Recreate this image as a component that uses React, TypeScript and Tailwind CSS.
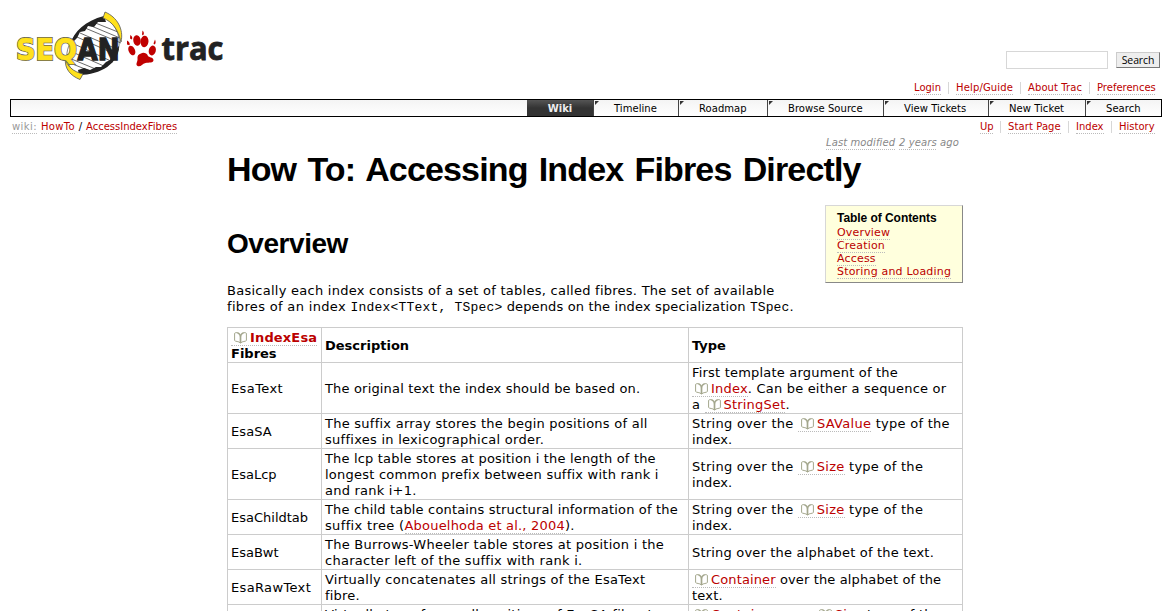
import React from "react";

type BoxProps = { children: React.ReactNode; className?: string };

function A({ children, className = "" }: BoxProps) {
  return (
    <a className={`border-b border-dotted border-[#bbb] text-[#b00] ${className}`}>{children}</a>
  );
}

function BookIcon() {
  return (
    <svg width="13" height="12" viewBox="0 0 13 12" className="mr-[3px] ml-[3px] inline-block align-[-2px]">
      <g fill="none" stroke="#a3a68c">
        <path d="M6.500 4.500 V11" strokeWidth="1.700" />
        <path d="M3.500 .8 C5.500 1.200 6.300 2.500 6.500 5 C6.700 2.500 7.500 1.200 9.500 .8" strokeWidth="1.300" />
        <path d="M4.300 1 C2.500 .4 1.400 .6 .6 1.300 V8.500 C1.500 9.800 4.500 9 6.500 11 C8.500 9 11.500 9.800 12.400 8.500 V1.300 C11.600 .6 10.500 .4 8.700 1" strokeWidth="1" />
      </g>
    </svg>
  );
}

function Doc({ children }: BoxProps) {
  return (
    <A>
      <BookIcon />
      {children}
    </A>
  );
}

function L({ children, className = "" }: BoxProps) {
  return <span className={`block ${className}`}>{children}</span>;
}

function Logo() {
  return (
    <svg width="215" height="74" viewBox="12 8 215 74" role="img" aria-label="SeqAn trac">
      <path d="M78 74 C60 64 66 42 80 31 C88 23 99 18 104 17 C120 26 124 46 113 60 C104 70 87 71 79 76 Z" fill="#fff" stroke="#333" strokeWidth=".6" />
      <g stroke="#444" strokeWidth=".8">
        <path d="M93 22 L118 32 M89 25 L120 38 M85 28 L121 43 M80 33 L119 50 M77 37 L117 55 M72 43 L113 62 M70 51 L106 67 M69 58 L98 70 M70 63 L90 71" />
      </g>
      <path d="M70 45 C74 31 85 21 104 16 L106 22 L98 22 L94 27 L88 26 L85 31 L80 32 L77 38 Z" fill="#222" />
      <path d="M78 70 L84 68 L90 70 L96 67 L101 67 L106 62 L110 60 L112 53 L119 46 C119 63 101 75 79 75 Z" fill="#222" />
      <path d="M105 12 C117 17 124 29 121 42 C118 30 113 22 103 18 Z" fill="#ffe11b" stroke="#555" strokeWidth=".8" />
      <path d="M65.500 58 C66 66 74 72 83 74 L80 79.500 C71 76 64 69 65.500 58 Z" fill="#ffe11b" stroke="#555" strokeWidth=".8" />
      <g fontFamily="'DejaVu Sans', sans-serif" fontWeight="bold" fontSize="29.500">
        <text x="16" y="60" textLength="61" lengthAdjust="spacingAndGlyphs" fill="#ffe11b" stroke="#555" strokeWidth="2">SEQ</text>
        <text x="16" y="60" textLength="61" lengthAdjust="spacingAndGlyphs" fill="#ffe11b" stroke="#ffe11b" strokeWidth=".6" aria-hidden="true">SEQ</text>
        <text x="77.500" y="60" textLength="42" lengthAdjust="spacingAndGlyphs" fill="#222" stroke="#222" strokeWidth="1.400">AN</text>
      </g>
      <g fill="#c00000">
        <ellipse cx="137" cy="40.500" rx="3.700" ry="5.300" transform="rotate(-10 137 40.500)" />
        <ellipse cx="144.500" cy="41.500" rx="4" ry="5.800" transform="rotate(5 144.500 41.500)" />
        <ellipse cx="131.800" cy="50.500" rx="3.200" ry="5" transform="rotate(-25 131.800 50.500)" />
        <ellipse cx="152.300" cy="50.500" rx="3.500" ry="5" transform="rotate(15 152.300 50.500)" />
        <path d="M130 38.500 l.3 -3.500 q3 2 1.500 4.500 Z M142 34.500 l.5 -4 q2.500 2.500 .5 5 Z M127 44.500 l0 -4 q3.500 2 2.500 4.800 Z M153.500 43.500 l1.500 -4 q1.500 3.500 -.5 5 Z" />
        <path d="M141 53.500 C143 52 147 53 148 56 C149 57.500 153 57 153.500 60 C153.500 63 149 62.500 145.500 63 C142 64 140.500 67.500 137.500 66 C135 64 138 61.500 137.500 59 C137 56 138.500 54 141 53.500 Z" />
      </g>
      <text x="161.500" y="60" fontFamily="'Open Sans', sans-serif" fontWeight="bold" fontSize="33" textLength="62" lengthAdjust="spacingAndGlyphs" fill="#222" stroke="#222" strokeWidth=".8">trac</text>
    </svg>
  );
}

const tabs = [
  { label: "Timeline", box: "w-[85px]" },
  { label: "Roadmap", box: "w-[89px]" },
  { label: "Browse Source", box: "w-[116px]" },
  { label: "View Tickets", box: "w-[105px]" },
  { label: "New Ticket", box: "w-[97px]" },
  { label: "Search", box: "w-[76px]" },
];

function NavRow({ items }: { items: { label: string; box: string }[] }) {
  return (
    <div className="flex h-[13px] leading-[12px] whitespace-nowrap">
      {items.map((it, i) => (
        <div key={it.label} className={`flex h-[12px] ${i ? "ml-[7px] border-l border-[#d7d7d7] pl-[7px]" : ""}`}>
          <A className={`block h-[13px] ${it.box}`}>{it.label}</A>
        </div>
      ))}
    </div>
  );
}

const td = "border border-[#ccc] px-[3px] pt-[2px] pb-0 align-middle";
const mono = "font-['Courier_New','Liberation_Mono',monospace] text-[13px] leading-[10px]";

function Row({ name, desc, type }: { name: React.ReactNode; desc: React.ReactNode; type: React.ReactNode }) {
  return (
    <tr>
      <td className={td}>{name}</td>
      <td className={td}>{desc}</td>
      <td className={td}>{type}</td>
    </tr>
  );
}

export default function App() {
  return (
    <div className="h-[611px] w-[1172px] overflow-hidden bg-white font-['Verdana','DejaVu_Sans',sans-serif] text-[13px] text-black">
      <header className="flex h-[99px] justify-between pr-[12px] pl-[12px] text-[10px]">
        <div className="pt-[8px]">
          <Logo />
        </div>
        <div className="flex flex-col items-end pt-[51px]">
          <div className="flex gap-[8px]">
            <div className="h-[18px] w-[102px] border border-[#d7d7d7]" />
            <button className="mt-[1px] h-[16px] w-[44px] border border-t-[#ccc] border-r-[#777] border-b-[#777] border-l-[#ccc] bg-[#eee] font-['Open_Sans',sans-serif] text-[10.5px] leading-[14px] tracking-[-0.1px] text-black">Search</button>
          </div>
          <div className="mt-[12px] mr-[5px] pt-px">
            <NavRow items={[{ label: "Login", box: "w-[27px]" }, { label: "Help/Guide", box: "w-[57px] tracking-[0.15px]" }, { label: "About Trac", box: "w-[54px] tracking-[0.1px]" }, { label: "Preferences", box: "w-[58px]" }]} />
          </div>
        </div>
      </header>

      <nav className="mx-[10px] flex h-[18px] justify-end border border-black bg-linear-to-b from-[#f4f4f4] to-white text-[10px] leading-[17px] whitespace-nowrap">
        <div className="h-[16px] w-[66px] bg-linear-to-b from-[#555] via-[#333] to-[#333] text-center font-bold text-[#eee]">Wiki</div>
        {tabs.map((t) => (
          <div key={t.label} className={`flex h-[16px] border-l border-[#444] ${t.box}`}>
            <svg width="4" height="5" className="mt-[1px] ml-[1px]"><path d="M0 0H4L0 4Z" fill="#333" /></svg>
            <span className="pl-[15px] tracking-[0.05px]">{t.label}</span>
          </div>
        ))}
      </nav>

      <div className="flex h-[19px] justify-between pt-[4px] pr-[17px] pl-[12px] text-[10px] leading-[12px]">
        <div className="flex h-[13px] whitespace-nowrap">
          <span className="h-[13px] w-[25px] border-b border-dotted border-[#bbb] tracking-[0.4px] text-[#999]">wiki:</span>
          <A className="ml-[4px] block h-[13px] w-[34px] tracking-[0.3px]">HowTo</A>
          <span className="w-[11px] text-center">/</span>
          <A className="block h-[13px] w-[91px]">AccessIndexFibres</A>
        </div>
        <NavRow items={[{ label: "Up", box: "w-[13px]" }, { label: "Start Page", box: "w-[53px] tracking-[0.1px]" }, { label: "Index", box: "w-[28px]" }, { label: "History", box: "w-[36px]" }]} />
      </div>

      <main className="ml-[227px] w-[736px]">
        <div className="flex h-[13px] justify-end gap-[4px] pt-px pr-[4px] text-[10px] leading-[12px] tracking-[0.1px] whitespace-nowrap text-[#888] italic">
          <span className="h-[13px] w-[69px] border-b border-dotted border-[#bbb]">Last modified</span>
          <span className="h-[13px] w-[37px] border-b border-dotted border-[#bbb]">2 years</span>
          <span className="w-[19px]">ago</span>
        </div>
        <div className="flex h-[134px]">
          <div className="w-[598px] font-['Liberation_Sans',Arial,sans-serif] font-bold whitespace-nowrap">
            <h1 className="text-[34px] leading-[40px] tracking-[-0.85px] [word-spacing:2.6px]">How To: Accessing Index Fibres Directly</h1>
            <h2 className="mt-[39px] text-[28px] leading-[32px] tracking-[-0.45px]">Overview</h2>
          </div>
          <aside className="mt-[56px] h-[78px] w-[138px] shrink-0 border border-t-[#d7d7d7] border-r-[#888] border-b-[#888] border-l-[#d7d7d7] bg-[#ffffdd] pt-[6px] pl-[11px] text-[11px] leading-[13px] whitespace-nowrap">
            <h4 className="mb-[1px] font-['Liberation_Sans',Arial,sans-serif] text-[12px] font-bold tracking-[-0.05px]">Table of Contents</h4>
            <ul className="tracking-[0.18px]">
              {["Overview", "Creation", "Access", "Storing and Loading"].map((s) => (
                <li key={s} className="h-[13px]"><A className="inline-block h-[13px] leading-[12px]">{s}</A></li>
              ))}
            </ul>
          </aside>
        </div>

        <div className="h-[44px] text-[13px] leading-[16px] whitespace-nowrap">
          <L className="tracking-[0.26px]">Basically each index consists of a set of tables, called fibres. The set of available</L>
          <L className="tracking-[0.14px]">
            <span className="tracking-[0.33px]">fibres of an index </span><code className={`${mono} tracking-[0.2px]`}>{"Index<TText, TSpec>"}</code> depends on the index specialization <code className={`${mono} tracking-[0.1px]`}>TSpec</code>.
          </L>
        </div>

        <table className="w-[736px] table-fixed border-collapse text-[13px] leading-[16px] whitespace-nowrap">
          <colgroup>
            <col className="w-[94px]" />
            <col className="w-[367px]" />
            <col className="w-[274px]" />
          </colgroup>
          <tbody>
            <tr className="text-left font-bold">
              <th className={td}><L className="tracking-[0.15px]"><Doc>IndexEsa</Doc></L><L>Fibres</L></th>
              <th className={td}>Description</th>
              <th className={td}>Type</th>
            </tr>
            <Row
              name={<L className="tracking-[0.4px]">EsaText</L>}
              desc={<L className="tracking-[0.17px]">The original text the index should be based on.</L>}
              type={<><L className="tracking-[0.2px]">First template argument of the</L><L className="tracking-[0.2px]"><Doc>Index</Doc>. Can be either a sequence or</L><L className="tracking-[0.2px]">a <Doc>StringSet</Doc>.</L></>}
            />
            <Row
              name={<L className="tracking-[0.1px]">EsaSA</L>}
              desc={<><L className="tracking-[0.25px]">The suffix array stores the begin positions of all</L><L className="tracking-[0.27px]">suffixes in lexicographical order.</L></>}
              type={<><L className="tracking-[0.28px]">String over the <Doc>SAValue</Doc> type of the</L><L className="tracking-[0.1px]">index.</L></>}
            />
            <Row
              name="EsaLcp"
              desc={<><L className="tracking-[0.17px]">The lcp table stores at position i the length of the</L><L className="tracking-[0.23px]">longest common prefix between suffix with rank i</L><L className="tracking-[0.22px]">and rank i+1.</L></>}
              type={<><L className="tracking-[0.27px]">String over the <Doc>Size</Doc> type of the</L><L className="tracking-[0.1px]">index.</L></>}
            />
            <Row
              name="EsaChildtab"
              desc={<><L className="tracking-[0.17px]">The child table contains structural information of the</L><L className="tracking-[0.25px]"><span className="tracking-[0.35px]">suffix tree (</span><A className="tracking-[0.2px]">Abouelhoda et al., 2004</A>).</L></>}
              type={<><L className="tracking-[0.27px]">String over the <Doc>Size</Doc> type of the</L><L className="tracking-[0.1px]">index.</L></>}
            />
            <Row
              name="EsaBwt"
              desc={<><L className="tracking-[0.26px]">The Burrows-Wheeler table stores at position i the</L><L className="tracking-[0.28px]">character left of the suffix with rank i.</L></>}
              type={<L className="tracking-[0.19px]">String over the alphabet of the text.</L>}
            />
            <Row
              name={<L className="tracking-[0.35px]">EsaRawText</L>}
              desc={<><L className="tracking-[0.24px]">Virtually concatenates all strings of the EsaText</L><L className="tracking-[0.2px]">fibre.</L></>}
              type={<><L className="tracking-[0.13px]"><Doc>Container</Doc> over the alphabet of the</L><L className="tracking-[0.2px]">text.</L></>}
            />
            <Row
              name="EsaRawSA"
              desc={<><L className="tracking-[0.27px]">Virtually transforms all positions of EsaSA fibre to</L><L>raw text positions.</L></>}
              type={<><L className="tracking-[0.27px]"><Doc>Container</Doc> over <Doc>Size</Doc> type of the</L><L>index.</L></>}
            />
          </tbody>
        </table>
      </main>
    </div>
  );
}
